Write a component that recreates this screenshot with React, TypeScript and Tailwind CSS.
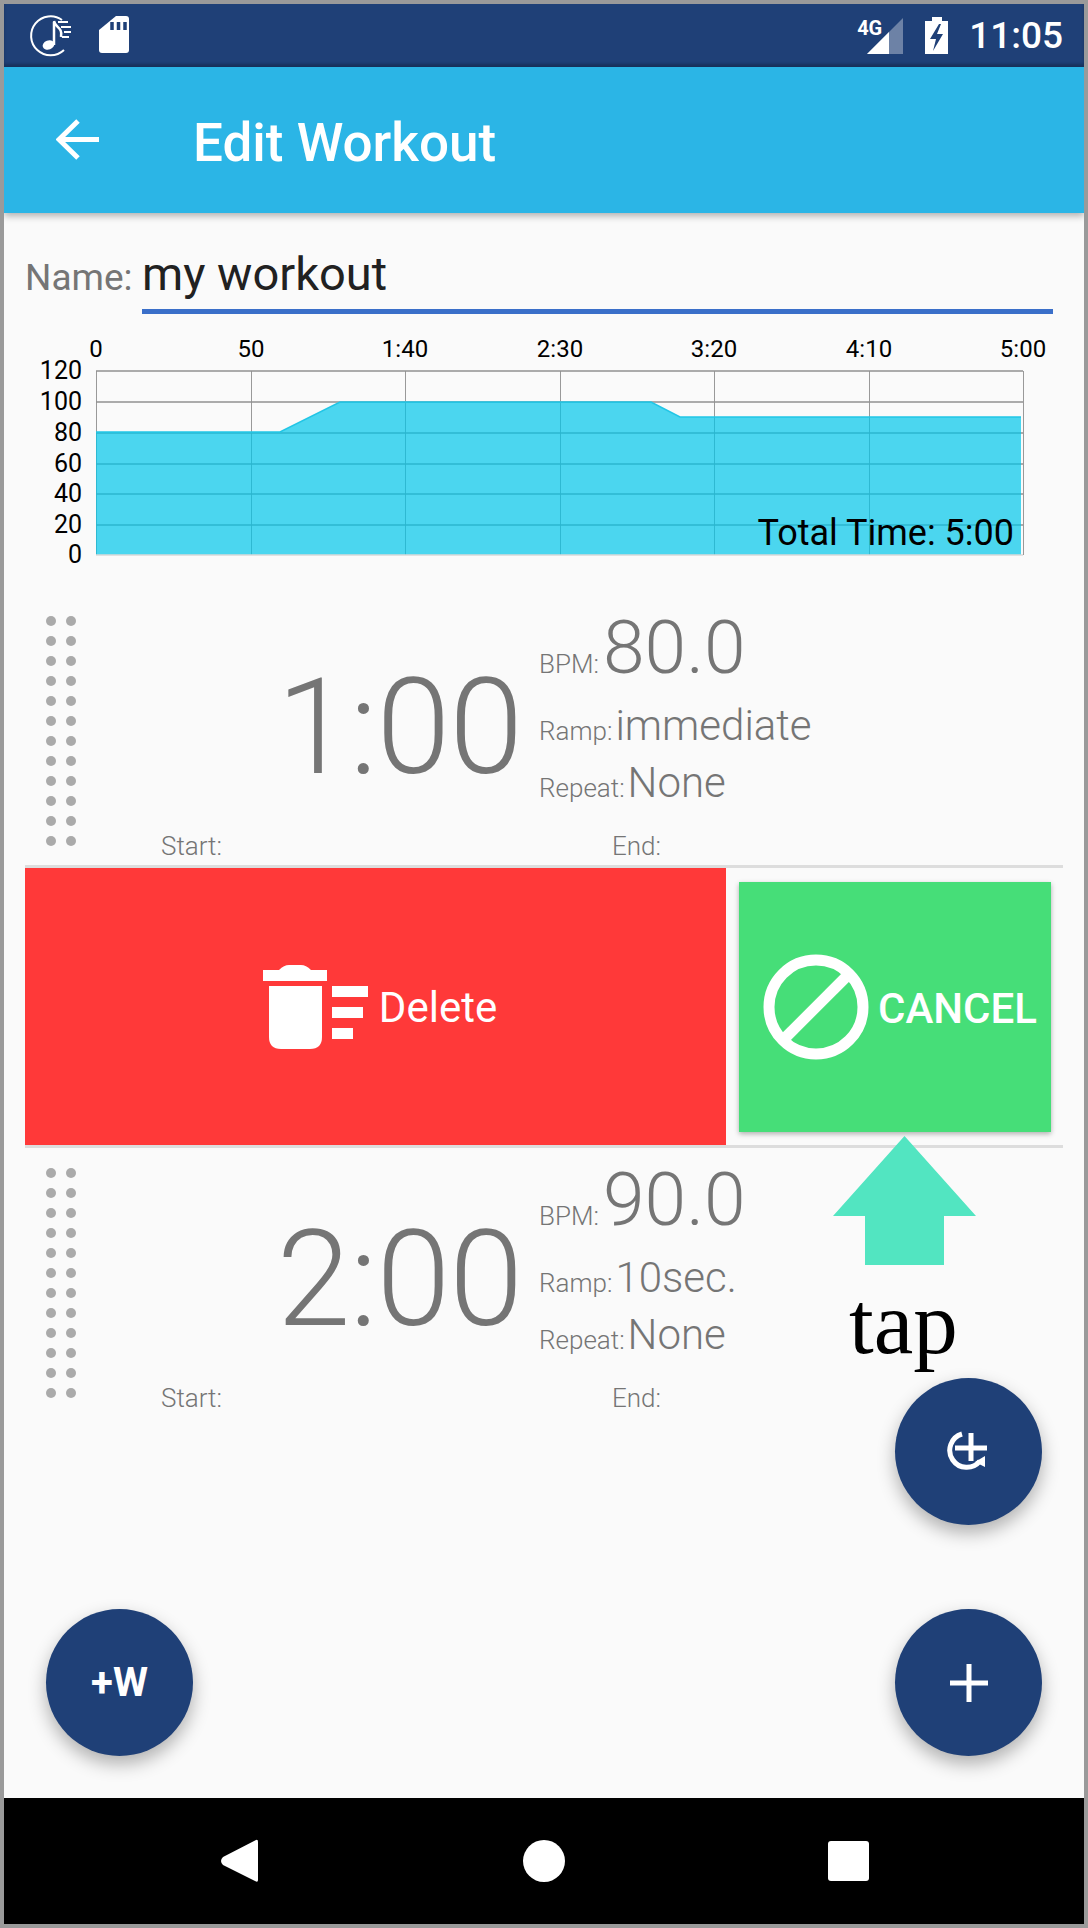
const xLabels = [
  { x: 96, t: "0" },
  { x: 251, t: "50" },
  { x: 405, t: "1:40" },
  { x: 560, t: "2:30" },
  { x: 714, t: "3:20" },
  { x: 869, t: "4:10" },
  { x: 1023, t: "5:00" },
];
const yLabels = [
  { y: 370, t: "120" },
  { y: 401, t: "100" },
  { y: 432, t: "80" },
  { y: 463, t: "60" },
  { y: 493, t: "40" },
  { y: 524, t: "20" },
  { y: 554, t: "0" },
];

function StatusBar() {
  return (
    <div className="h-[63px] shrink-0 bg-[#1f4077] flex items-center justify-between shadow-[inset_0_-3px_3px_rgba(0,0,0,0.2)]">
      <div className="flex items-center">
        <svg width="126" height="50" viewBox="0 0 126 50" className="ml-[24px] mt-[-1px]" fill="none" stroke="white">
          {/* app logo */}
          <path d="M34 10 A19.5 19.5 0 1 0 36 40" strokeWidth="2" />
          <path d="M26 12 V35" strokeWidth="2.5" />
          <ellipse cx="20.5" cy="35" rx="6" ry="4.6" fill="white" stroke="none" transform="rotate(-20 20.5 35)" />
          <path d="M26 11 C27 18 35 17 33 27" strokeWidth="2.5" />
          <path d="M30 12 H40 M33 17 H43 M36 22 H43 M34 27 H41" strokeWidth="2" />
          {/* sd card */}
          <path d="M88 6 H98 Q101 6 101 9 V40 Q101 43 98 43 H74 Q71 43 71 40 V20 Z" fill="white" stroke="none" />
          <path d="M84 12 V20 M90.500 12 V20 M97 12 V20" stroke="#1f4077" strokeWidth="3.500" />
        </svg>
      </div>
      <div className="flex items-center relative">
        <svg width="100" height="50" viewBox="0 0 100 50" className="mt-[-1px]">
          <path d="M46 8 V44 H10 Z" fill="white" fillOpacity="0.35" />
          <path d="M32 22 V44 H10 Z" fill="white" />
          <path d="M68 11 H75 V7 H85 V11 H91 V44 H68 Z" fill="white" />
          <path d="M82 14 L73 29 H79 L76 41 L86 24 H80 L84 14 Z" fill="#1f4077" />
        </svg>
        <span className="absolute left-[0px] top-[7px] text-[20px] leading-[20px] font-bold font-['Roboto',sans-serif] text-white">4G</span>
        <span className="ml-[12px] mr-[21px] text-[37px] leading-[36px] font-medium font-['Roboto',sans-serif] text-white">11:05</span>
      </div>
    </div>
  );
}

function AppBar() {
  return (
    <div className="relative z-10 h-[146px] shrink-0 bg-[#2bb5e6] flex items-center shadow-[0_3px_7px_rgba(0,0,0,0.3)]">
      <svg width="44" height="44" viewBox="0 0 44 44" className="ml-[52px] mt-[-1px]" fill="none" stroke="white" strokeWidth="5">
        <path d="M43 21.500 H5 M22 3 L3 21.500 L22 40" />
      </svg>
      <span className="ml-[93px] text-[53px] leading-[60px] font-medium font-['Roboto',sans-serif] text-white mt-[5px]">Edit Workout</span>
    </div>
  );
}

function Chart() {
  const verticals = [96, 251, 405, 560, 714, 869, 1023];
  const horizontals = [371, 402, 433, 464, 494, 525];
  return (
    <svg width="1080" height="250" viewBox="4 320 1080 250" className="block mt-[6px] font-['Roboto',sans-serif]">
      {verticals.map((x) => (
        <line key={x} x1={x + 0.5} x2={x + 0.5} y1="371" y2="555" stroke="#999999" strokeWidth="1" />
      ))}
      {horizontals.map((y) => (
        <line key={y} x1="96" x2="1023" y1={y} y2={y} stroke="#909090" strokeWidth="1.500" />
      ))}
      <path d="M96 432 H280 L340 402 H651 L680 417 H1021 V555 H96 Z" fill="#00c6ea" fillOpacity="0.7" />
      <path d="M96 432 H280 L340 402 H651 L680 417 H1021" fill="none" stroke="#22c6e6" strokeWidth="1.500" />
      <line x1="96" x2="1023" y1="555" y2="555" stroke="#d8d8d8" strokeWidth="1.500" />
      {xLabels.map((l) => (
        <text key={l.t} x={l.x} y="357" textAnchor="middle" fontSize="24" fill="#000">{l.t}</text>
      ))}
      {yLabels.map((l) => (
        <text key={l.t} x="82" y={l.y + 9} textAnchor="end" fontSize="25" fill="#000">{l.t}</text>
      ))}
      <text x="1014" y="545" textAnchor="end" fontSize="36" fill="#000">Total Time: 5:00</text>
    </svg>
  );
}

function DragDots() {
  return (
    <div className="w-[30px] ml-[42px] mt-[6px] grid grid-cols-[10px_10px] gap-x-[10px] gap-y-[10px] h-fit">
      {Array.from({ length: 24 }).map((_, i) => (
        <div key={i} className="h-[10px] w-[10px] rounded-full bg-[#aaaaaa]" />
      ))}
    </div>
  );
}

interface IntervalProps {
  time: string;
  bpm: string;
  ramp: string;
  repeat: string;
}

function IntervalRow({ time, bpm, ramp, repeat }: IntervalProps) {
  return (
    <div className="flex h-[255px] font-['Roboto',sans-serif] text-[#757575] font-light">
      <DragDots />
      <div className="flex flex-col flex-1 ml-[-5px]">
        <div className="flex h-[225px]">
          <div className="w-[453px] mt-[50px] text-right text-[133px] leading-[135px] tracking-[-1px] pr-[2px]">{time}</div>
          <div className="ml-[15px] flex flex-col">
            <div className="flex items-baseline h-[75px]">
              <span className="text-[26px] leading-[24px] mr-[4px]">BPM:</span>
              <span className="text-[75px] leading-[75px]">{bpm}</span>
            </div>
            <div className="flex items-baseline h-[40px] mt-[21px]">
              <span className="text-[26px] leading-[24px] mr-[3px]">Ramp:</span>
              <span className="text-[42px] leading-[40px]">{ramp}</span>
            </div>
            <div className="flex items-baseline h-[40px] mt-[17px]">
              <span className="text-[26px] leading-[24px] mr-[3px]">Repeat:</span>
              <span className="text-[42px] leading-[40px]">{repeat}</span>
            </div>
          </div>
        </div>
        <div className="flex text-[26px] leading-[23px]">
          <span className="ml-[90px] w-[451px]">Start:</span>
          <span>End:</span>
        </div>
      </div>
    </div>
  );
}

function SwipeActions() {
  return (
    <div className="mx-[21px]">
      <div className="h-[3px] bg-[#dddddd]" />
      <div className="flex h-[277px] font-['Roboto',sans-serif]">
        <div className="w-[701px] bg-[#ff3939] flex items-center justify-center">
          <svg width="106" height="85" viewBox="263 965 106 85" className="ml-[9px] mt-[2px]" fill="white">
            <path d="M263 970 H279 Q284 965 289 965 H301 Q306 965 311 970 H327 V981 H263 Z" />
            <path d="M269 986 H322 V1037 Q322 1049 310 1049 H281 Q269 1049 269 1037 Z" />
            <rect x="332" y="986" width="36" height="11" />
            <rect x="332" y="1007" width="31" height="11" />
            <rect x="332" y="1028" width="21" height="11" />
          </svg>
          <span className="ml-[10px] mt-[3px] text-[42px] leading-[46px] text-white">Delete</span>
        </div>
        <div className="ml-[13px] mt-[14px] w-[312px] h-[250px] bg-[#46de78] flex items-center shadow-[0_2px_5px_rgba(0,0,0,0.3)]">
          <svg width="106" height="106" viewBox="0 0 106 106" className="ml-[24px]" fill="none" stroke="white" strokeWidth="11">
            <circle cx="53" cy="53" r="47" />
            <path d="M86 20 L20 86" />
          </svg>
          <span className="ml-[9px] mt-[3px] text-[42px] leading-[46px] font-medium text-white">CANCEL</span>
        </div>
      </div>
      <div className="h-[3px] bg-[#dddddd]" />
    </div>
  );
}

function Fab({ className, children }: { className: string; children: React.ReactNode }) {
  return (
    <div className={`absolute h-[147px] w-[147px] rounded-full bg-[#1f4077] flex items-center justify-center shadow-[0_8px_18px_rgba(0,0,0,0.3)] ${className}`}>
      {children}
    </div>
  );
}

function NavBar() {
  return (
    <div className="h-[126px] shrink-0 bg-black relative">
      <svg width="1080" height="126" viewBox="4 1798 1080 126" className="block" fill="white">
        <path d="M256 1840 Q258 1839 258 1842 V1880 Q258 1883 255 1881 L223 1865 Q219 1861 223 1857 Z" />
        <circle cx="544" cy="1861" r="21" />
        <rect x="828" y="1841" width="41" height="40" rx="3" />
      </svg>
    </div>
  );
}

export default function App() {
  return (
    <div className="w-[1088px] h-[1928px] border-[4px] border-[#9a9a9a] flex flex-col overflow-hidden bg-[#fafafa]">
      <StatusBar />
      <AppBar />
      <div className="relative flex-1 bg-[#fafafa]">
        {/* name field */}
        <div className="flex items-baseline pt-[38px] pl-[21px]">
          <span className="w-[117px] text-[37px] leading-[46px] text-[#757575] font-['Roboto',sans-serif]">Name:</span>
          <div className="w-[911px] border-b-[5px] border-[#3a6fc9] pb-[12px] text-[47px] leading-[46px] text-[#212121] font-['Roboto',sans-serif]">my workout</div>
        </div>
        <Chart />
        <div className="mt-[40px]">
          <IntervalRow time="1:00" bpm="80.0" ramp="immediate" repeat="None" />
        </div>
        <SwipeActions />
        <div className="mt-[14px]">
          <IntervalRow time="2:00" bpm="90.0" ramp="10sec." repeat="None" />
        </div>

        {/* annotation over the screenshot */}
        <svg width="143" height="129" viewBox="0 0 143 129" className="absolute left-[829px] top-[923px]" fill="#52e5c1">
          <path d="M71.500 0 L143 80 H111 V129 H32 V80 H0 Z" />
        </svg>
        <span className="absolute left-[845px] top-[1067px] text-[89px] leading-[87px] text-black font-['Liberation_Serif',serif]">tap</span>

        <Fab className="left-[891px] top-[1165px]">
          <svg width="44" height="44" viewBox="0 0 44 44" fill="none" stroke="white" className="mt-[-1px]">
            <path d="M15 5 A17 17 0 1 0 33 32" strokeWidth="5" />
            <path d="M8 19 H40 M24 4 V32" strokeWidth="5" />
            <path d="M28 33 L38 27 L38 38 Z" fill="white" stroke="none" />
          </svg>
        </Fab>
        <Fab className="left-[891px] top-[1396px]">
          <svg width="38" height="38" viewBox="0 0 38 38" stroke="white" strokeWidth="5">
            <path d="M0 19 H38 M19 0 V38" />
          </svg>
        </Fab>
        <Fab className="left-[42px] top-[1396px]">
          <span className="text-[40px] leading-[40px] font-bold text-white font-['Roboto',sans-serif]">+W</span>
        </Fab>
      </div>
      <NavBar />
    </div>
  );
}
